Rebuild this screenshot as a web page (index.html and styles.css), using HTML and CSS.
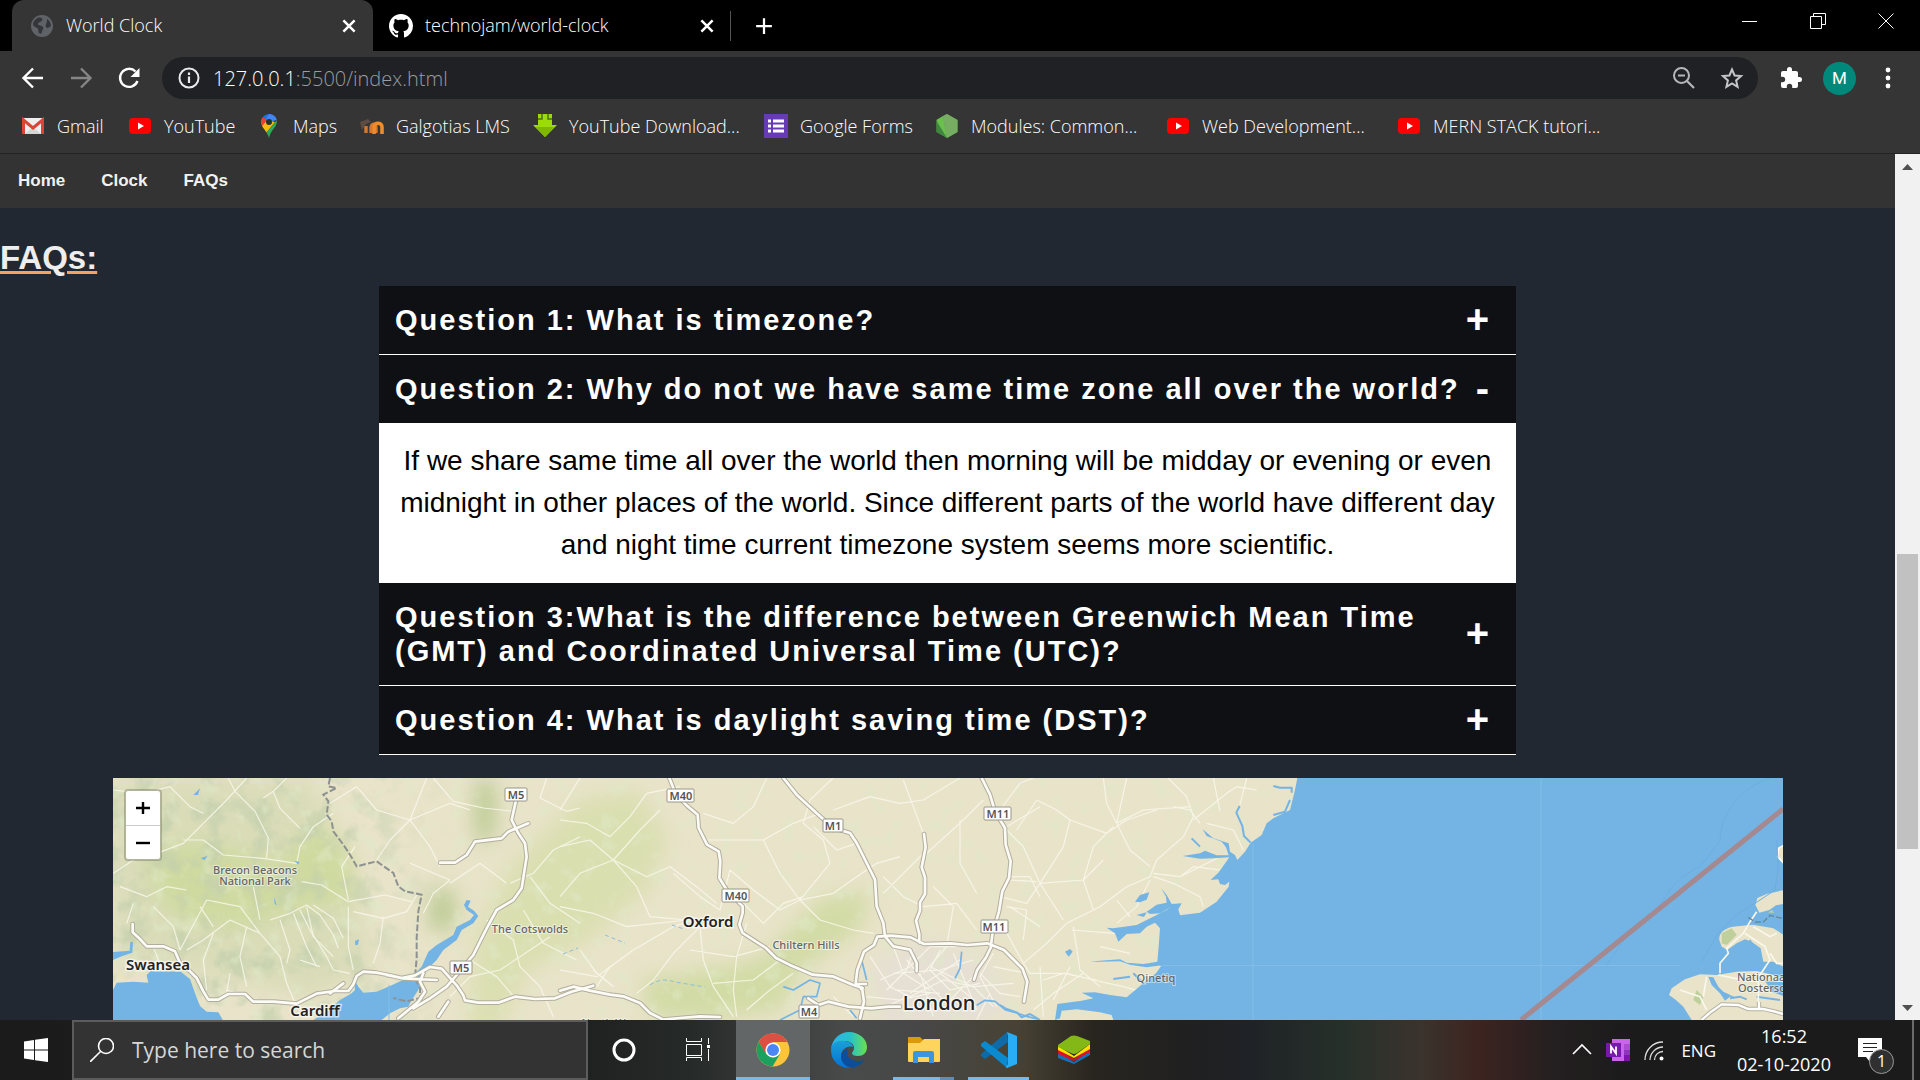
FILE: index.html
```html
<!DOCTYPE html>
<html lang="en">
<head>
<meta charset="utf-8">
<title>World Clock</title>
<link rel="stylesheet" href="styles.css">
</head>
<body>
<svg class="defs" width="0" height="0" aria-hidden="true">
  <symbol id="close" viewBox="0 0 16 16"><path d="M3.500 3.500l9 9M12.500 3.500l-9 9" stroke="currentColor" stroke-width="2" fill="none"/></symbol>
  <symbol id="youtube" viewBox="0 0 24 24"><rect x="1" y="4" width="22" height="16" rx="4" fill="#f00"/><path d="M10 8.500l6 3.500-6 3.500z" fill="#fff"/></symbol>
</svg>

<header class="browser">
  <div class="tabstrip">
    <div class="tab active">
      <svg class="i24" viewBox="0 0 24 24"><circle cx="12" cy="12" r="11" fill="#5f6368"/><path d="M9 3.500c3 0 4 1 3 3S8 8 8 10s4 1 5 3-1 3-1 5-2 2-3 1 0-4-2-5-4-2-4-4 3-6 6-6.500zM17 5c2 1 4 4 4 7l-3 2c-2 0-3-2-2-4s1-3 1-5z" fill="#35363a"/></svg>
      <span class="tab-title">World Clock</span>
      <button class="ib" aria-label="Close tab"><svg class="i20"><use href="#close"/></svg></button>
    </div>
    <div class="tab">
      <svg class="i24" viewBox="0 0 16 16"><path fill="#fff" d="M8 0C3.580 0 0 3.580 0 8c0 3.540 2.290 6.530 5.470 7.590.4.070.55-.17.55-.38 0-.19-.01-.82-.01-1.490-2.010.37-2.530-.49-2.690-.94-.09-.23-.48-.94-.82-1.130-.28-.15-.68-.52-.01-.53.63-.01 1.080.58 1.230.82.72 1.210 1.870.87 2.330.66.07-.52.28-.87.51-1.070-1.780-.2-3.640-.89-3.640-3.950 0-.87.31-1.590.82-2.150-.08-.2-.36-1.020.08-2.120 0 0 .67-.21 2.200.82.64-.18 1.320-.27 2-.27s1.360.09 2 .27c1.530-1.040 2.200-.82 2.200-.82.44 1.100.16 1.920.08 2.120.51.56.82 1.270.82 2.150 0 3.070-1.870 3.750-3.650 3.950.29.25.54.73.54 1.480 0 1.070-.01 1.930-.01 2.200 0 .21.15.46.55.38A8.010 8.010 0 0 0 16 8c0-4.420-3.580-8-8-8z"/></svg>
      <span class="tab-title">technojam/world-clock</span>
      <button class="ib" aria-label="Close tab"><svg class="i20"><use href="#close"/></svg></button>
    </div>
    <button class="ib newtab" aria-label="New tab"><svg class="i24" viewBox="0 0 24 24"><path d="M12 1.500v21M1.500 12h21" stroke="#fff" stroke-width="3"/></svg></button>
    <div class="wincontrols">
      <button class="ib" aria-label="Minimize"><svg class="i16" viewBox="0 0 16 16"><path d="M0 8.500h15" stroke="#fff"/></svg></button>
      <button class="ib" aria-label="Restore"><svg class="i16" viewBox="0 0 16 16"><path d="M.5 3.500h11v12H.5zM3.500 3.500V.5h12v11h-4" stroke="#fff" fill="none"/></svg></button>
      <button class="ib" aria-label="Close"><svg class="i16" viewBox="0 0 16 16"><path d="M.5.5l15 15M15.500.5l-15 15" stroke="#fff"/></svg></button>
    </div>
  </div>

  <div class="toolbar">
    <div class="navbtns">
      <button class="ib" aria-label="Back"><svg class="i24" viewBox="0 0 24 24"><path d="M22 12H3M12 2.500L2.500 12l9.500 9.500" fill="none" stroke="#fff" stroke-width="2.400"/></svg></button>
      <button class="ib" aria-label="Forward"><svg class="i24" viewBox="0 0 24 24"><path d="M2 12h19M12 2.500l9.500 9.500-9.500 9.500" fill="none" stroke="#868686" stroke-width="2.400"/></svg></button>
      <button class="ib" aria-label="Reload"><svg class="i24" viewBox="0 0 24 24"><path d="M20.500 15a9 9 0 1 1-2-9.500" fill="none" stroke="#fff" stroke-width="2.400"/><path d="M22.500 2v9h-9z" fill="#fff"/></svg></button>
    </div>
    <div class="omnibox">
      <svg class="i24" viewBox="0 0 24 24"><circle cx="12" cy="12" r="9.500" fill="none" stroke="#e8eaed" stroke-width="2"/><path d="M12 10.500V17M12 6.500V9" stroke="#e8eaed" stroke-width="2.200"/></svg>
      <span class="url">127.0.0.1<span>:5500/index.html</span></span>
      <button class="ib" aria-label="Zoom"><svg class="i24" viewBox="0 0 24 24"><circle cx="9.500" cy="9.500" r="7.500" fill="none" stroke="#b4b6b8" stroke-width="2"/><path d="M6 9.500h7M15 15l7 7" stroke="#b4b6b8" stroke-width="2.200"/></svg></button>
      <button class="ib" aria-label="Bookmark"><svg class="i24" viewBox="0 0 24 24"><path d="M12 3.500l2.600 6 6.400.6-4.900 4.300 1.500 6.400-5.600-3.400-5.600 3.400 1.500-6.400L3 10.100l6.400-.6z" fill="none" stroke="#c4c6c8" stroke-width="2"/></svg></button>
    </div>
    <div class="extbtns">
      <button class="ib" aria-label="Extensions"><svg class="i24" viewBox="0 0 24 24"><path fill="#fff" d="M20.500 11H19V7a2 2 0 0 0-2-2h-4V3.500a2.500 2.500 0 0 0-5 0V5H4a2 2 0 0 0-2 2v3.800h1.500a2.700 2.700 0 0 1 0 5.400H2V20a2 2 0 0 0 2 2h3.800v-1.500a2.700 2.700 0 0 1 5.400 0V22H17a2 2 0 0 0 2-2v-4h1.500a2.500 2.500 0 0 0 0-5z"/></svg></button>
      <button class="avatar">M</button>
      <button class="ib" aria-label="Menu"><svg class="i24" viewBox="0 0 24 24"><g fill="#fff"><circle cx="12" cy="4" r="2.400"/><circle cx="12" cy="12" r="2.400"/><circle cx="12" cy="20" r="2.400"/></g></svg></button>
    </div>
  </div>

  <nav class="bookmarks" aria-label="Bookmarks">
    <a href="#"><svg class="i24" viewBox="0 0 24 24"><rect x="1" y="4" width="22" height="16" rx="1" fill="#eee"/><path d="M4 20l8-7 8 7z" fill="#d5d5d5"/><path d="M2.500 20V6L12 14l9.500-8v14" fill="none" stroke="#db4437" stroke-width="3"/></svg><span>Gmail</span></a>
    <a href="#"><svg class="i24"><use href="#youtube"/></svg><span>YouTube</span></a>
    <a href="#"><svg class="i24" viewBox="0 0 24 24"><path d="M12 0a8 8 0 0 0-6.200 2.900L12 8z" fill="#1a73e8"/><path d="M12 0c4 0 7 2.500 7.800 6L12 8 9 5z" fill="#4285f4"/><path d="M5.800 2.900A8 8 0 0 0 5 12l5-6z" fill="#ea4335"/><path d="M5 12c1 2 3 4 4.500 6.500L18 8l-8-2z" fill="#fbbc04"/><path d="M19.800 6c1 7-6 9-7.800 18-.8-2.500-1.500-4-2.500-5.500z" fill="#34a853"/><circle cx="12" cy="8" r="3" fill="#233"/></svg><span>Maps</span></a>
    <a href="#"><svg class="i24" viewBox="0 0 24 24"><path d="M6 19v-7M11 19v-5c0-5 5-5 5 0v5m0-5" fill="none" stroke="#d5772c" stroke-width="3.400"/><path d="M14 20v-7c0-5 8-5 8 0v7" fill="none" stroke="#f08a2c" stroke-width="3.600"/><path d="M0 8l8-3 3 3-5 2-4 6z" fill="#5d4d42"/></svg><span>Galgotias LMS</span></a>
    <a href="#"><svg class="i24" viewBox="0 0 24 24"><path d="M5 0h14v11h5L12 23 0 11h5z" fill="#9bdb0a"/><path d="M5 5h4V0M19 5h-4V0" fill="none" stroke="#4b7010" stroke-width="1.500"/><path d="M3 13h18l-9 10z" fill="#7fb800"/></svg><span>YouTube Download...</span></a>
    <a href="#"><svg class="i24" viewBox="0 0 24 24"><path fill="#673ab7" d="M0 0h24v24H0z"/><path d="M4 7h3M4 12h3M4 17h3M9 7h11M9 12h11M9 17h11" stroke="#fff" stroke-width="3"/></svg><span>Google Forms</span></a>
    <a href="#"><svg class="i24" viewBox="0 0 24 24"><path fill="#55a047" d="M12 0l10.500 6v12L12 24 1.500 18V6z"/><path d="M1.500 6L12 24 8 2z" fill="#69c04c"/><path d="M8 2l4-2 10.500 6v12L12 24z" fill="#76ad62"/><path d="M1.500 8v10L12 24z" fill="#3f873f"/></svg><span>Modules: Common...</span></a>
    <a href="#"><svg class="i24"><use href="#youtube"/></svg><span>Web Development...</span></a>
    <a href="#"><svg class="i24"><use href="#youtube"/></svg><span>MERN STACK tutori...</span></a>
  </nav>
</header>

<div class="viewport">
  <div class="page">
    <nav class="sitenav"><a href="#">Home</a><a href="#">Clock</a><a href="#">FAQs</a></nav>
    <main>
      <h1>FAQs:</h1>
      <section class="accordion">
        <button class="question" aria-expanded="false"><span>Question 1: What is timezone?</span><b>+</b></button>
        <button class="question open" aria-expanded="true"><span>Question 2: Why do not we have same time zone all over the world?</span><b>-</b></button>
        <p class="answer">If we share same time all over the world then morning will be midday or evening or even midnight in other places of the world. Since different parts of the world have different day and night time current timezone system seems more scientific.</p>
        <button class="question" aria-expanded="false"><span>Question 3:What is the difference between Greenwich Mean Time (GMT) and Coordinated Universal Time (UTC)?</span><b>+</b></button>
        <button class="question" aria-expanded="false"><span>Question 4: What is daylight saving time (DST)?</span><b>+</b></button>
      </section>
    </main>
    <div class="map">
      <svg class="tiles" viewBox="113 778 1670 242" preserveAspectRatio="xMinYMin slice" role="img" aria-label="Map of southern England and Wales">
        <defs>
          <filter id="soft" x="-20%" y="-20%" width="140%" height="140%"><feGaussianBlur stdDeviation="10"/></filter>
          <filter id="hills" x="0" y="0" width="100%" height="100%"><feTurbulence type="fractalNoise" baseFrequency=".04" numOctaves="4" seed="8"/><feColorMatrix values="0 0 0 0 .55  0 0 0 0 .63  0 0 0 0 .42  4 0 0 0 -1.900"/></filter>
          <filter id="fields" x="0" y="0" width="100%" height="100%"><feTurbulence type="fractalNoise" baseFrequency=".06" numOctaves="4" seed="3"/><feColorMatrix values="0 0 0 0 .74  0 0 0 0 .82  0 0 0 0 .58  4 0 0 0 -2.200"/></filter>
          <linearGradient id="fade"><stop offset="0" stop-color="#fff"/><stop offset=".65" stop-color="#fff"/><stop offset="1" stop-color="#000"/></linearGradient>
          <mask id="west"><rect x="113" y="778" width="340" height="242" fill="url(#fade)"/></mask>
        </defs>
        <rect x="113" y="778" width="1670" height="242" fill="#e8e3c9"/>
        <g filter="url(#soft)">
          <path d="M113 778h200l40 100 20 90-60 30-200-40z" fill="#dadcb8"/>
          <path d="M150 850l50-10 80 20 40-40 30 30 10 50-60 10-60 20-60-10-30-30z" fill="#cfdaa0"/>
          <path d="M478 930l30-60 70-70 60-10 30 50-20 50-60 50-60 30-30 60h-30z" fill="#dadfb0"/>
          <path d="M640 980l60-10 60-10 60-60 50-10-10 40-60 40-20 40-80 10-50-5z" fill="#d2dba5"/>
          <path d="M475 780h20v60h-20zM430 890h25v40h-25z" fill="#bccb93"/>
          <path d="M870 960l60-20 60 20 20 50-40 20H880z" fill="#e6dfd4"/>
        </g>
        <rect x="113" y="778" width="340" height="242" filter="url(#hills)" mask="url(#west)" opacity=".7"/>
        <rect x="113" y="778" width="1200" height="242" filter="url(#fields)" opacity=".5"/>

        <!-- minor roads -->
        <g fill="none" stroke="#faf8ec" stroke-width="3.500" opacity=".85" stroke-linejoin="round">
          <g transform="translate(100 760) scale(.33333)">
            <path d="M40 340l60-40 70-20 80-30 60-60 70-70 60-66M40 90l90 10 80-20 60 60 40 20M250 240l60 0 60 45 120 10 100 15 10-50 40-60 60-40M385 54l20 40 60 60 40 80-5 60M560 54l-40 40-30 20M600 205l-60-60-20-50M605 365l60 10 80 50 110-20 80 20M745 420l-20-100 40-60M760 455l90 20 70-20 30-50"/>
            <path d="M100 430l-20 60M260 570l50-30 80-60 90 40 60 70 20 80 30 70M510 480l60-20 50-25 40 30 40 60 15 40M480 520l-60-80-100-20-80 150M600 450l30 60 50 80 20 40 50 10M745 440v120l15 70M850 470l-10 80-20 60M390 640l-10 60M220 720l-60-160M690 130l80-50 60 70 100 30 120-50 60 20M930 180l-60 60-40 60M930 180l50-126M930 180l60 80 30 60M1000 54l60 70 90 20 90 10M1050 360l-50 40-30 60M1050 360l-120-50M1220 370l-80-60-90 60M1230 370l70-30 60-70 80-40M1290 350l60 80 90 60M1270 450l60 100 100 50M1160 480l80 60 20 80 60 60 40 90M1110 600l80 50 60 70M1050 710l60-60 90-20 90-60 60-40M1340 54l-20 60 80 40 40-10"/>
            <path d="M620 440l20 90 60 60M580 460l40 100 30 60M640 435l60 40 30 60M540 480l30 90-10 40M440 500l-20 90 20 90M340 520l-30 80 10 90M300 440l40 60M160 440l60 60 20 70M60 380l80 30 60-30 60 10M460 380l20 100M380 690l60 20M600 600l60 20"/>
          </g>
          <g transform="translate(560 760) scale(.33333)">
            <path d="M0 150l60-96M0 180l80 10 70 40 60-60 50-70 100-20M160 300l-70-60L0 260M160 300l80-90 60-60M160 300l-100 40-60 70M160 300l100 50 70-30 80 60 60 50M160 300l70 80 40 90 110 10M430 160l90 30 60-50 40-86M440 240l80 0 90 0 90-50 80-30M510 330l-30 120-60-40-80-70M510 330l70 60 80 60 60-30M540 420l70 70 60-60 60-20M720 420l-60-80-50-100M720 420l100-20 70-50 60-40 70-20M720 420l60 60 100 30 60 10M720 420l90-110-20-70-60-50 20-70 90-86M760 200l70 70 60-20M930 110l-110 40M930 110l90 20 70-10 110-66M1090 220l-60-160M1100 280l110-100 60-60M1200 180v130l50 90M1090 280l-60 60-60 60M1350 350l60 0 30 60M1340 200l100-60M970 350l60 60 60 30 100-10 60 80M1180 440l-60-60M1350 440l90 60M1180 440l-20 120-70 80"/>
            <path d="M60 570l50 70 50 40M400 480l-60 20-120 70-110 80-110-20M420 500l10 100 30 80 60 90M420 500l-80 80-60 80-50 40M0 440l100 20 100 40 180-20M560 490l-30 100-10 100 10 80M630 560l-110 30-130-20M660 600l-80 60-120 10M700 640l-70 50-70 60M930 590l60 90 60 30 100-50 90 20 60 60M960 660l90-40 60-60 80 0M1040 600l60 70 60 60 80-80M1110 620l130 60 120-10M1080 640l40 130M1180 580l70 170M920 710l100 10 90-20M1200 600l-150 100M880 770l-60-60M1300 580l-40 70 50 90M1400 640l-100-20"/>
            <path d="M100 630l60 50M110 680l40-60M1000 560l30 80 80 50M1060 570l-20 60-60 60M1140 570l-30 60 60 60 90-20M1000 640l140-10 100-30M1140 640l90 70M980 740l60-30M1260 640l60 60 60 10M1010 690l130 10M1290 700l-40 80"/>
          </g>
          <g transform="translate(1000 760) scale(.33333)">
            <path d="M0 150l60-80 40-16M50 210l60-90 60 30 40 30 110 40 60-40 90-30M350 190l-30-60-10-76M350 190l30-136M350 190l80-40 140-10M350 190l40 80 60 50M340 200l-60 60-30 100M120 370l-50-110-60-60M120 370l130-10M120 370l70-110 20-80M120 370l-40 60-80-20M120 370l70 110M30 360l80 5M200 490l100-50 80-60 70-30 20-50 80-70 30-60-20-60-60-60M580 180l100-80 30-20 60 10M620 190l80 20 30 60M600 190l-30-40-50-10M460 340l80 10 60-30 60-30M460 350l60 20 80 40 10 30M540 350l40-30 80 10M450 360l-40 80-60 50M350 420l40 50M280 450l-30-90 60-60M200 490l-60 60-70 60 20 30 110 0 80 20 90 20 70 20M220 500l20 130 60 50M215 510l130 10M300 560l90 20M70 610l-60-110M120 620l10 150M130 660l60-20 100 20M20 440l60 10-10 90M640 54l20 100M740 54l-20 80M250 640l-90 60-60 50M160 720l50-100"/>
          </g>
        </g>

        <!-- seas, estuaries and lakes -->
        <g fill="#73b4e5">
          <g transform="translate(100 760) scale(.33333)">
            <path d="M39 690l11-22 50-3 45 3-5-23 12-12 90 2 28 22 15 43 15 38 20 17 35 2 14 24H39zM39 576l50-4 2-26 8 0-2 32-30 10-30 13z"/>
            <path d="M640 780L680 755 720 720 755 700 765 690 760 650 775 680 790 698 830 695 870 678 920 655 945 640 965 620 985 575 1010 555 1060 525 1070 500 1110 480 1122 465 1100 450 1092 435 1100 420 1112 422 1104 440 1122 452 1135 468 1120 490 1085 510 1070 540 1030 570 1010 600 985 625 965 655 955 690 935 720 925 740 900 745 870 760 845 780z"/>
            <path d="M280 105l20-20-6 20zM302 295l20-7-8 12zM584 302l14 4-4 8zM765 543l12-5-3 16-8 2zM522 410l8 26-6 -4z"/>
          </g>
          <g transform="translate(1000 760) scale(.33333)">
            <path d="M892 54L885 90 870 150 820 175 800 190 785 225 752 248 735 275 712 300 705 285 690 275 686 250 640 235 608 208 620 228 665 245 678 262 686 286 650 286 615 272 600 280 548 288 600 296 640 295 688 292 665 325 655 338 632 360 655 358 660 372 675 375 688 365 686 380 650 425 600 458 540 466 535 448 545 430 515 432 500 405 484 385 498 410 500 428 470 434 440 455 450 462 480 460 512 442 500 450 440 480 410 495 340 505 320 503 345 520 355 545 380 522 420 520 440 500 465 488 480 505 476 560 472 605 430 612 380 608 360 598 300 602 270 606 360 604 390 614 440 622 485 616 468 640 430 670 380 712 330 705 285 697 245 698 280 715 245 722 200 728 172 732 165 780 180 775 185 752 230 748 300 757 335 765 340 780H2400V54z"/>
            <path d="M405 425l15-20 28-8-8 22-20 8zM195 575l15-8 8 8-12 15zM410 465l30-8-8 14z"/>
          </g>
        </g>
        <g fill="none" stroke="#73b4e5" stroke-width="6" stroke-linejoin="round">
          <path transform="translate(1000 760) scale(.33333)" d="M752 248l-20-20-5-30-18-40 10-20M820 78l20 5 35 0 0 15M870 120l-15 35-35 10M390 650l-50 7M400 640l30 30M0 735l20 12 30 10 15 15 25-10 25 15M575 235l25 25"/>
          <path transform="translate(560 760) scale(.33333)" d="M1250 736l25-15 30 3 30 25 35 10 30 10 40 10M905 600l10 40 5 20M1205 575l-5 50-15 30M870 750l20 25M670 680l30 10 50-30 30 10-10 40-40 0-10 40-60 30" stroke-width="5"/>
        </g>
        <path d="M650 985q12-8 25-3l30 5M605 935l20 8M563 954l15-6M672 925l12 4" stroke="#8abde0" stroke-dasharray="4 3" fill="none"/>

        <!-- Dutch coast -->
        <g transform="translate(1440 760) scale(.33333)">
          <g fill="#e8e3c9">
            <path d="M1040 388L980 402 952 414 946 434 958 458 988 450 1008 436 1040 430zM838 540Q835 510 878 500L938 494 1000 505 1040 530V625L1000 605 970 605 962 565 935 545 915 538 890 550 862 570 845 560zM687 705L695 685 735 658 780 643 830 645 890 635 950 633 1000 645 1040 660V780H755L730 740 705 718z"/>
            <path d="M1040 250l-24 15-3 25 27 30z" stroke="#fff" stroke-width="5"/>
          </g>
          <path d="M845 520l30-15 15 20-30 30-15-5zM770 690l20 20-10 25-20-15zM985 458l10-8 8 8z" fill="#bfd09c"/>
          <path d="M805 650L820 652 835 680 850 695 885 712 870 710 855 722 840 700 815 675zM975 662L1040 668V712L995 695z" fill="#73b4e5"/>
          <path d="M870 715l30-5 20 8M950 710l70 10M930 540l5 15" stroke="#73b4e5" stroke-width="6" fill="none"/>
          <path d="M840 640v-30l25-30-5-15 50-45 20-35 20-30M915 520l60 40 15 40-40 60M990 580l20 30 20 0M940 500l50 30 20-10M835 645l50 10 70 10v60M720 690l60 20 20 40M800 650l-10 60" fill="none" stroke="#faf8ec" stroke-width="5"/>
          <path d="M785 780l25-22 35-25 50 2 30 12 45 0 35 8 35 10M957 748v-22" fill="none" stroke="#b5b1a1" stroke-width="13"/>
          <path d="M785 780l25-22 35-25 50 2 30 12 45 0 35 8 35 10M957 748v-22" fill="none" stroke="#fff" stroke-width="7"/>
          <path d="M990 54c-90 30-150 110-150 190l-60 75c-60 30-90 60-120 120l-100 90-60 85M1010 240l5 80-10 70-60 40-50 30-60 60-50 85" fill="none" stroke="#6cade0" stroke-width="3"/>
          <path d="M925 472l20 14 25 0 20-20 40 10" fill="none" stroke="#65889b" stroke-width="4" stroke-dasharray="18 6"/>
        </g>
        <path d="M1253 843v177M1541 778v242M1160 965.500h520M389 985v35" stroke="#82bce7" fill="none"/>
        <path d="M1521 1020l262-211" stroke="#a48991" stroke-width="5"/>

        <!-- county boundary -->
        <path transform="translate(100 760) scale(.33333)" d="M690 54l-5 25 25 5-40 20 15 20-5 40 15 20 5 30 30 40 20 30 20 35 60-15 50 35 15 40 20 15 50 10-10 50-5 80 0 60-5 60 15 30 0 30-40 10-40-10" fill="none" stroke="#8d9291" stroke-width="6" stroke-dasharray="20 7"/>

        <!-- motorways: casing, then surface -->
        <defs>
          <g id="motorways" fill="none" stroke-linejoin="round" stroke-linecap="round">
            <path transform="translate(100 760) scale(.33333)" d="M98 492v25l22 20 20 22 50 0 35 15 15 35 30 25 20 20 20 40 15 25 30 0 30-17 50 0 25 23h60l70 6 60-30 55-8 40 0 15-20 10-25 20-13 40 3 50 10 25 6 40-8 45-25 35 5 45 50 20 30 5 15 40 7h60l50-18 60 7 60-2 50-20 65-18M860 645l50 10 100 5M690 700l40-30M970 640l-10 25 15 30-20 30-60 50M940 745l50-30 50-35 30-35 50-60 40-80 30-55 50-30 25-35 15-95-5-40-20-30-20-40 20-90M1285 190l-60 25-20 20-80 10-25 40-35 23h-45M1045 725l-30 45"/>
            <path transform="translate(560 760) scale(.33333)" d="M0 692l40-12 50 12 60 12 40 5 50 20 30 30 40 20 50-5 60-5 60 2M328 54l20 50 35 35 30 25 3 40 25 50 35 20 5 30-3 50 25 40 45 45 0 20-10 35 10 25 70 45 30 30 40 20 70 30 60 5 60 25 30 10M670 54l40 50 70 65 40 35 50 15 20 30 30 60 25 50 5 80 20 50 5 40 25 30 50 10 20 40 0 25M1265 54l25 50 15 50 30 50 2 50 15 50-5 50-20 40-10 60-20 70-5 40-15 30-25 35-10 30M1092 222l5 40-12 60 10 30 0 50-15 25 0 25-12 30 10 40 0 25M745 715l30 20 30-10 60 15 70 5 50-5 35 0M900 775l12-50-5-35-20-20 5-40 20-55 30-20 10-25 40-3 60 5 40 20 80-2 50 5 60-5 50 20 55 55 15 40-10 60M888 672h30"/>
          </g>
        </defs>
        <use href="#motorways" stroke="#b2ae9e" stroke-width="14"/>
        <use href="#motorways" stroke="#fcfbf6" stroke-width="8"/>

        <g class="shield">
          <rect x="505" y="788" width="22" height="13" rx="1"/><text x="516" y="799">M5</text>
          <rect x="450" y="961" width="22" height="13" rx="1"/><text x="461" y="972">M5</text>
          <rect x="667" y="789" width="27" height="13" rx="1"/><text x="681" y="800">M40</text>
          <rect x="722" y="889" width="27" height="13" rx="1"/><text x="736" y="900">M40</text>
          <rect x="823" y="819" width="20" height="13" rx="1"/><text x="833" y="830">M1</text>
          <rect x="984" y="807" width="27" height="13" rx="1"/><text x="998" y="818">M11</text>
          <rect x="981" y="920" width="27" height="13" rx="1"/><text x="994" y="931">M11</text>
          <rect x="799" y="1005" width="20" height="13" rx="1"/><text x="809" y="1016">M4</text>
        </g>
        <g class="area">
          <text x="255" y="874">Brecon Beacons</text><text x="255" y="885">National Park</text>
          <text x="530" y="933">The Cotswolds</text><text x="806" y="949">Chiltern Hills</text>
          <text x="1156" y="982">Qinetiq</text><text x="618" y="1027">North Wessex</text>
          <text class="edge" x="1737" y="981">Nationaal</text><text class="edge" x="1738" y="992">Oosterschelde</text>
        </g>
        <g class="city">
          <text x="158" y="970">Swansea</text><text x="315" y="1016">Cardiff</text><text x="708" y="927">Oxford</text><text class="capital" x="939" y="1010">London</text>
        </g>
      </svg>
      <div class="zoomctl"><button aria-label="Zoom in"><svg class="i16" viewBox="0 0 16 16"><path d="M8 2v12M1 8h14" stroke="#000" stroke-width="2.400"/></svg></button><button aria-label="Zoom out"><svg class="i16" viewBox="0 0 16 16"><path d="M1 8h14" stroke="#000" stroke-width="2.400"/></svg></button></div>
    </div>
  </div>
  <div class="scrollbar" aria-hidden="true">
    <svg viewBox="0 0 25 25"><path d="M7 16l5.500-6 5.500 6z" fill="#505050"/></svg>
    <i class="above"></i><i class="thumb"></i><i class="below"></i>
    <svg viewBox="0 0 25 25"><path d="M7 10l5.500 6 5.500-6z" fill="#505050"/></svg>
  </div>
</div>

<footer class="taskbar">
  <button class="start" aria-label="Start"><svg class="i24" viewBox="0 0 24 24"><path fill="#fff" d="M0 3.400L10 2v9.500H0zM11 1.800L24 0v11.500H11zM0 12.500h10V22L0 20.600zM11 12.500h13V24l-13-1.800z"/></svg></button>
  <label class="search"><svg class="i24" viewBox="0 0 24 24"><circle cx="16" cy="8" r="7.500" fill="none" stroke="#fff" stroke-width="1.600"/><path d="M10.500 13.500L0 24" stroke="#fff" stroke-width="1.600"/></svg><input type="text" placeholder="Type here to search" aria-label="Search"></label>
  <div class="apps">
    <button aria-label="Cortana"><svg class="i24" viewBox="0 0 24 24"><circle cx="12" cy="12" r="10" fill="none" stroke="#fff" stroke-width="3"/></svg></button>
    <button aria-label="Task view"><svg class="i24" viewBox="0 0 24 24"><path d="M.5 0v3.500h15V0M.5 6.500h15v11H.5zM.5 23v-3.500h15V23M22.500 0v6M22.500 11v12" fill="none" stroke="#fff"/><path d="M21 7h3v3h-3z" fill="#fff"/></svg></button>
    <button class="current" aria-label="Chrome"><svg class="i36" viewBox="0 0 36 36"><circle cx="18" cy="18" r="16.500" fill="#fbc43a"/><path d="M3.700 9.700A16.500 16.500 0 0 1 32.500 10H18l-7.500 12z" fill="#dd4f43"/><path d="M3.700 9.700A16.500 16.500 0 0 0 17.500 34.500L25 22l-7 3.500-7-3.500z" fill="#1aa15f"/><circle cx="18" cy="18" r="7.600" fill="#fff"/><circle cx="18" cy="18" r="6" fill="#4a87f5"/></svg></button>
    <button aria-label="Edge"><svg class="i36" viewBox="0 0 36 36"><defs><linearGradient id="e1"><stop offset="0" stop-color="#2cb2ef"/><stop offset=".55" stop-color="#29c3c8"/><stop offset="1" stop-color="#6be04a"/></linearGradient><linearGradient id="e2" y2="1" x2="0"><stop offset="0" stop-color="#1ba0d8"/><stop offset="1" stop-color="#0472d6"/></linearGradient></defs><path d="M0 17C1 7 9 0 18 0c10 0 18 7 18 15 0 6-4 9-9 9-4 0-6-1-6-3 0-1 2-2 2-5 0-4-4-7-9-7C7 9 1 12 0 17z" fill="url(#e1)"/><path d="M0 18c0-7 7-10 13-9 5 0 9 3 9 6-6-2-12 3-12 9 0 5 4 10 10 11.800C10 37 0 30 0 18z" fill="url(#e2)"/><path d="M17 16c-4 2-7 5-7 9 0 6 6 11 12 10.500 5-1 9-4 12-8-8 4-17 0-18-6 0-2 .5-4 1-5.500z" fill="#0d4e9c"/></svg></button>
    <button class="running stacked" aria-label="File Explorer"><svg class="i36" viewBox="0 0 36 36"><path d="M2 5h12l3 3v4H2z" fill="#dd9a08"/><path d="M2 11h12l4-4h16v22a1 1 0 0 1-1 1H3a1 1 0 0 1-1-1z" fill="#ffd45c"/><path d="M7 31V21q0-2 2-2h17q2 0 2 2v10h-5v-6H12v6z" fill="#3a96dd"/></svg></button>
    <button class="running" aria-label="Visual Studio Code"><svg class="i36" viewBox="0 0 36 36"><path d="M26 0l1 10L4 27l-4-3v-2z" fill="#0e6ba8"/><path d="M0 14v-2l4-3 23 17-1 10z" fill="#0b8ad0"/><path d="M26 0l10 4v28l-10 4q-1 0-1-1l2-3V4z" fill="#29adf5"/></svg></button>
    <button aria-label="BlueStacks"><svg class="i36" viewBox="0 0 36 36"><path d="M2 20l16 10 16-12v5L18 32 2 26z" fill="#1570b8"/><path d="M2 17l16 10 16-12v5L18 29 2 22z" fill="#d81324"/><path d="M2 14l16 10 16-12v5L18 26 2 18z" fill="#ffe000"/><path d="M2 13L15 4q3-1 6 0l13 5v3L21 21q-3 2-6 0L2 15z" fill="#84b816"/></svg></button>
  </div>
  <div class="tray">
    <button class="ib" aria-label="Show hidden icons"><svg class="i24" viewBox="0 0 24 24"><path d="M3 16l9-9 9 9" fill="none" stroke="#fff" stroke-width="1.600"/></svg></button>
    <button class="ib" aria-label="OneNote"><svg class="i24" viewBox="0 0 24 24"><path d="M6 1h18v22H6z" fill="#ca64ea"/><path d="M18 6h6v6h-6z" fill="#ae4bd5"/><path d="M18 12h6v5h-6z" fill="#9332bf"/><path d="M18 17h6v6h-6z" fill="#7719aa"/><path d="M0 5h15v14H0z" fill="#7719aa"/><path d="M5 15.500V8.500l5 7v-7" stroke="#fff" stroke-width="1.800" fill="none"/></svg></button>
    <button class="ib" aria-label="Network"><svg class="i24" viewBox="0 0 24 24"><g fill="none" stroke="#ddd" stroke-width="1.300"><path d="M3 22C3 12 11 4 21 4"/><path d="M8 22c0-7 6-13 13-13"/><path d="M12.500 22c0-5 4-8.500 8.500-8.500"/></g><circle cx="19.500" cy="20.500" r="2" fill="#fff"/></svg></button>
    <span class="lang">ENG</span>
    <time class="clock"><span>16:52</span><span>02-10-2020</span></time>
    <button class="notif" aria-label="Notifications"><svg class="i24" viewBox="0 0 24 24"><path d="M0 0h24v19H16l-4 5-4-5H0z" fill="#fff"/><path d="M5 5.500h14M5 9.500h14M5 13.500h10" stroke="#222"/></svg><span class="badge">1</span></button>
  </div>
</footer>
</body>
</html>
```
FILE: styles.css
```css
* { box-sizing: border-box; }
body {
  margin: 0;
  height: 100vh;
  display: flex;
  flex-direction: column;
  overflow: hidden;
  background: #222831;
  color: #fff;
  font-family: "Open Sans", "Noto Sans", sans-serif;
}
button { padding: 0; border: 0; background: none; color: inherit; font: inherit; }
a { color: inherit; text-decoration: none; }
svg { display: block; flex: none; }
.defs { position: absolute; }
.i16 { width: 16px; height: 16px; }
.i20 { width: 20px; height: 20px; }
.i24 { width: 24px; height: 24px; }
.i36 { width: 36px; height: 36px; }
.ib { display: grid; place-items: center; flex: none; }

/* browser frame */
.browser { flex: none; background: #353535; border-bottom: 1px solid #232323; }
.tabstrip { display: flex; align-items: stretch; height: 51px; padding-left: 12px; background: #000; }
.tab { display: flex; align-items: center; gap: 12px; width: 358px; padding: 0 14px 0 16px; }
.tab + .tab { position: relative; }
.tab + .tab::after { content: ""; position: absolute; right: 0; top: 11px; height: 30px; border-right: 1px solid #555; }
.tab.active { width: 361px; padding-left: 18px; background: #353535; border-radius: 12px 12px 0 0; }
.tab-title { flex: 1; font-weight: 300; font-size: 18px; line-height: 24px; padding-bottom: 2px; }
.newtab { width: 66px; }
.newtab svg { width: 18px; }
.wincontrols { display: flex; margin-left: auto; height: 42px; }
.wincontrols .ib { width: 68px; }
.toolbar { display: flex; align-items: center; height: 54px; }
.navbtns { display: flex; gap: 24px; padding: 0 21px; width: 162px; }
.omnibox { flex: 1; display: flex; align-items: center; gap: 24px; height: 42px; padding: 0 14px 0 15px; border-radius: 21px; background: #202125; }
.url { flex: 1; margin-left: -12px; font-size: 20px; font-weight: 300; }
.url span { color: #9a9c9f; }
.extbtns { display: flex; align-items: center; gap: 20px; padding: 0 20px 0 21px; }
.avatar { width: 33px; height: 33px; border-radius: 50%; background: #00897b; font: 17px Roboto, sans-serif; }
.bookmarks { display: grid; grid-template-columns: 107px 129px 103px 173px 231px 171px 231px 231px 231px; align-items: center; height: 48px; padding: 0 0 6px 21px; font-weight: 300; font-size: 18px; line-height: 24px; }
.bookmarks a { display: flex; align-items: center; gap: 12px; white-space: nowrap; }

/* web page */
.viewport { flex: 1; min-height: 0; display: flex; font-family: "Liberation Sans", Arial, sans-serif; }
.page { flex: 1; min-width: 0; display: flex; flex-direction: column; }
.sitenav { display: flex; align-items: center; height: 54px; flex: none; background: #333; }
.sitenav a { padding: 0 18px; font-size: 17px; font-weight: 700; color: #f2f2f2; }
h1 { margin: 31px 0 9px; font-size: 33px; line-height: 38px; color: #eee; text-decoration: underline 3px #f4a261; }
.accordion { width: 60%; margin: 0 auto; }
.question { display: flex; align-items: center; width: 100%; min-height: 69px; padding: 17px 25px 17px 16px; border-bottom: 1px solid #fff; background: #0f1014; text-align: left; font-size: 29px; font-weight: 700; line-height: 34px; letter-spacing: 2px; }
.question.open { min-height: 68px; border-bottom: 0; }
.question span { flex: 1; }
.question b { font-size: 40px; line-height: 32px; padding-bottom: 2px; }
.answer { margin: 0; padding: 17px 16px; background: #fff; color: #000; font-size: 28px; line-height: 42px; text-align: center; }
.map { position: relative; flex: 1; min-height: 0; margin: 23px 112px 0 113px; overflow: hidden; }
.tiles { width: 100%; height: 100%; font-family: "Noto Sans", "Open Sans", sans-serif; text-anchor: middle; }
.shield rect { fill: #fff; stroke: #99968c; }
.shield text { font-size: 11px; font-weight: 600; fill: #555; }
.area { font-size: 11px; font-weight: 500; fill: #666; paint-order: stroke; stroke: #ffffff80; stroke-width: 2px; }
.area .edge { text-anchor: start; }
.city { font-size: 15px; font-weight: 600; fill: #222; paint-order: stroke; stroke: #ffffffa0; stroke-width: 3px; }
.city .capital { font-size: 20px; font-weight: 500; }
.zoomctl { position: absolute; left: 12px; top: 12px; display: grid; width: 36px; border: 1px solid #b3b59b; border-radius: 3px; background: #fff; box-shadow: 0 0 0 1px #0003; }
.zoomctl button { display: grid; place-items: center; height: 34px; }
.zoomctl button + button { border-top: 1px solid #ccc; }
.scrollbar { display: flex; flex-direction: column; width: 25px; background: #f1f1f1; }
.scrollbar svg { width: 25px; height: 25px; }
.above { flex: 375; }
.thumb { flex: 295; margin: 0 2px; background: #c1c1c1; }
.below { flex: 146; }

/* taskbar */
.taskbar { flex: none; display: flex; height: 60px; background: linear-gradient(90deg, #1b1b1b 0, #1f2120 30%, #262a28 36%, #494a4a 44%, #474747 48%, #474234 53%, #28251f 57%, #202021 62%, #1f2226 65%, #26302a 70%, #3b332d 74%, #3c2420 77%, #241f20 81%, #1b1b1b 85%); }
.start { display: grid; place-items: center; width: 72px; }
.search { display: flex; align-items: center; gap: 18px; width: 516px; padding-left: 16px; border: 2px solid #5c5c5c; background: #333; }
.search input { flex: 1; min-width: 0; border: 0; padding: 0; background: none; color: #fff; font: 21px "Open Sans", sans-serif; }
.search input::placeholder { color: #d6d6d6; opacity: 1; }
.apps { display: grid; grid-template-columns: 71px 74px 73px 73px 73px 73px 73px; column-gap: 2px; }
.apps button { display: grid; place-items: center; }
.apps .current { margin-left: -1px; background: #636666; border-bottom: 3px solid #76b9ed; border-top: 3px solid #636666; }
.apps .running { background: linear-gradient(#76b9ed, #76b9ed) center bottom / 61px 3px no-repeat; }
.apps .stacked { background: linear-gradient(90deg, #76b9ed 47px, #5f8db3 47px) center bottom / 61px 3px no-repeat; }
.tray { display: flex; align-items: center; gap: 12px; margin-left: auto; margin-right: 6px; padding-right: 30px; border-right: 2px solid #6b6b6b; }
.lang { padding-left: 3px; font-size: 17px; }
.clock { display: grid; width: 112px; margin-right: 6px; font-size: 18px; line-height: 28px; text-align: center; }
.notif { position: relative; }
.badge { position: absolute; left: 11px; top: 11px; width: 25px; height: 25px; border: 1px solid #999; border-radius: 50%; background: #303030; font-size: 16px; line-height: 22px; text-align: center; }
```
